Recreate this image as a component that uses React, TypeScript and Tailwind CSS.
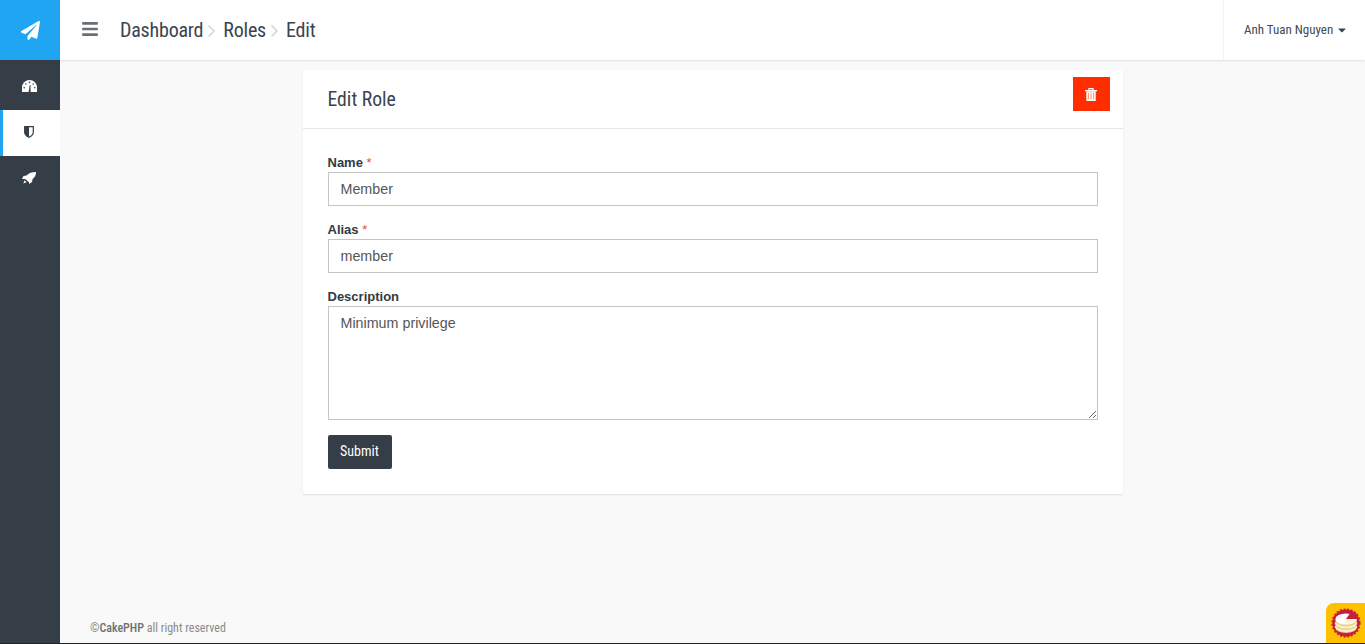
import React from "react";
import { FaBars, FaCaretDown, FaPaperPlane } from "react-icons/fa";

const condensed = { fontFamily: "Roboto, sans-serif" };

const Crumb: React.FC<{ label: string; last?: boolean }> = ({ label, last }) => (
  <>
    <span className="text-[20px] leading-none text-[#3a4450] [font-stretch:condensed] tracking-[-0.2px]">{label}</span>
    {!last && (
      <svg width="9" height="14" viewBox="0 0 9 14" className="ml-[4px] mr-[7px] mt-[2px]">
        <path d="M1.5 1.5 7 7l-5.5 5.5" fill="none" stroke="#d4d6d8" strokeWidth="1.6" />
      </svg>
    )}
  </>
);

const Field: React.FC<{ label: string; required?: boolean; children: React.ReactNode }> = ({ label, required, children }) => (
  <div className="mb-[15px]">
    <label className="block h-[18px] text-[13px] leading-[18px] font-bold text-[#333a42]">
      {label}
      {required && <span className="font-normal text-[#e8453c]"> *</span>}
    </label>
    {children}
  </div>
);

const GaugeIcon = () => (
  <svg viewBox="0 0 15 12" className="h-[12px] w-[15px]">
    <path d="M0 12V7.5a7.5 7.5 0 0 1 15 0V12z" fill="#fff" />
    <g fill="#353d47">
      <circle cx="7.5" cy="2.4" r=".8" />
      <circle cx="3.8" cy="4" r=".8" />
      <circle cx="11.2" cy="4" r=".8" />
      <circle cx="2.2" cy="7.8" r=".8" />
      <circle cx="12.8" cy="7.8" r=".8" />
      <path d="M6.6 12 7.8 5h.7l.1 7z" />
    </g>
  </svg>
);

const ShieldIcon = () => (
  <svg viewBox="0 0 10 12" className="h-[12px] w-[10px]">
    <path d="M.7.7h8.6v5.6C9.3 8.8 7 10.4 5 11.3 3 10.4.7 8.8.7 6.3z" fill="#fff" stroke="#353d47" strokeWidth="1.2" />
    <path d="M.7.7H5v10.6C3 10.4.7 8.8.7 6.3z" fill="#353d47" />
  </svg>
);

const RocketIcon = () => (
  <svg viewBox="0 0 14 12" className="h-[12px] w-[14px]">
    <path d="M14 0C10 0 6.5 1 4.5 3.5L1.5 4 0 7h3.2L7 10.2V12l3-2 .6-3C13 5 14 3 14 0z" fill="#fff" />
    <path d="M2.4 8.2 4.6 10.2 1.4 11.6z" fill="#fff" />
  </svg>
);

const TrashIcon = () => (
  <svg viewBox="0 0 12 13" className="h-[13px] w-[12px]">
    <path d="M4 2V.6h4V2" fill="none" stroke="#fff" strokeWidth="1.2" />
    <path d="M0 2h12v1.3H0z" fill="#fff" />
    <path d="M1.3 3.3h9.4V13H1.3z" fill="#fff" />
    <path d="M3.4 4.6v6.6M6 4.6v6.6M8.6 4.6v6.6" stroke="#ff9a6b" strokeWidth="1.1" />
  </svg>
);

const CakeLogo = () => (
  <svg viewBox="0 0 30 30" className="h-[30px] w-[30px]">
    <circle cx="15" cy="15" r="13.6" fill="#c8203c" stroke="#c8203c" strokeWidth="2" strokeDasharray="2 1.6" />
    <path d="M4.5 11v9a10.5 5 0 0 0 21 0v-9z" fill="#e9d48f" />
    <path d="M4.5 14.5a10.5 5 0 0 0 21 0M4.5 18a10.5 5 0 0 0 21 0" stroke="#fbf3d5" strokeWidth="1.5" fill="none" />
    <ellipse cx="15" cy="11" rx="10.5" ry="5.5" fill="#fff" />
    <path d="M15 11 20 4l7 2-.5 5z" fill="#c8203c" />
    <path d="M15 11h10.5v2.6c-3 1.6-6 2.4-10.5 2.4z" fill="#fbf3d5" />
  </svg>
);

export default function App() {
  return (
    <div className="relative flex h-[644px] overflow-hidden border-b border-[#222] bg-[#f9f9f9]" style={{ fontFamily: '"Liberation Sans", Arial, sans-serif' }}>
      <aside className="flex w-[60px] shrink-0 flex-col bg-[#353d47]">
        <div className="flex h-[60px] items-center justify-center bg-[#1fa5f2] text-white">
          <FaPaperPlane className="h-[19px] w-[19px]" />
        </div>
        <div className="flex h-[50px] items-center justify-center pr-[2px] pt-[2px]">
          <GaugeIcon />
        </div>
        <div className="flex h-[46px] items-center justify-center border-l-[3px] border-[#1fa5f2] bg-white pb-[2px] pr-[6px]">
          <ShieldIcon />
        </div>
        <div className="flex h-[44px] items-center justify-center pr-[2px]">
          <RocketIcon />
        </div>
      </aside>

      <div className="flex min-w-0 flex-1 flex-col">
        <header className="flex h-[60px] shrink-0 items-center bg-white shadow-[0_1px_2px_rgba(0,0,0,0.1)]" style={condensed}>
          <FaBars className="ml-[22px] h-[18px] w-[16px] text-[#6b6f73] -mt-[2px]" />
          <nav className="ml-[22px] flex items-center">
            <Crumb label="Dashboard" />
            <Crumb label="Roles" />
            <Crumb label="Edit" last />
          </nav>
          <div className="ml-auto flex h-full w-[142px] items-center border-l border-[#f2f2f2] pl-[20px] text-[13px] text-[#3f4a56] [font-stretch:condensed]">
            <span>Anh Tuan Nguyen</span>
            <FaCaretDown className="ml-[4px] h-[12px] w-[10px] text-[#3a4450]" />
          </div>
        </header>

        <main className="flex flex-1 flex-col">
          <div className="mx-auto mt-[10px] w-[820px] rounded-[2px] bg-white shadow-[0_1px_2px_rgba(0,0,0,0.1)]">
            <div className="flex h-[59px] items-start justify-between border-b border-[#e6e6e6] pl-[25px] pr-[13px]">
              <h1 className="mt-[19px] text-[19.7px] leading-[22px] text-[#3a4450] [font-stretch:condensed]" style={condensed}>Edit Role</h1>
              <button className="mt-[7px] flex h-[34px] w-[37px] items-center justify-center bg-[#ff2d00]">
                <TrashIcon />
              </button>
            </div>
            <form className="px-[25px] pb-[25px] pt-[25px]">
              <Field label="Name" required>
                <input defaultValue="Member" className="block h-[34px] w-full border border-[#c4c4c4] px-[12px] text-[14.3px] text-[#555] outline-none" />
              </Field>
              <Field label="Alias" required>
                <input defaultValue="member" className="block h-[34px] w-full border border-[#c4c4c4] px-[12px] text-[14.3px] text-[#555] outline-none" />
              </Field>
              <Field label="Description">
                <textarea defaultValue="Minimum privilege" className="block h-[114px] w-full border border-[#c4c4c4] px-[12px] py-[7px] text-[14.3px] leading-[18px] text-[#555] outline-none" />
              </Field>
              <button type="button" className="h-[34px] w-[64px] rounded-[2px] bg-[#353d47] pb-[2px] text-[14px] text-white [font-stretch:condensed]" style={condensed}>Submit</button>
            </form>
          </div>

          <footer className="mt-auto pb-[8px] pl-[30px] text-[12px] leading-[14px] text-[#8a8a8a] [font-stretch:condensed]" style={condensed}>
            ©<span className="font-medium text-[#6f6f6f]">CakePHP</span> all right reserved
          </footer>
        </main>
      </div>

      <div className="absolute bottom-0 right-0 flex h-[40px] w-[39px] items-start justify-center rounded-tl-[8px] bg-[#ffc000] pt-[5px]">
        <CakeLogo />
      </div>
    </div>
  );
}
